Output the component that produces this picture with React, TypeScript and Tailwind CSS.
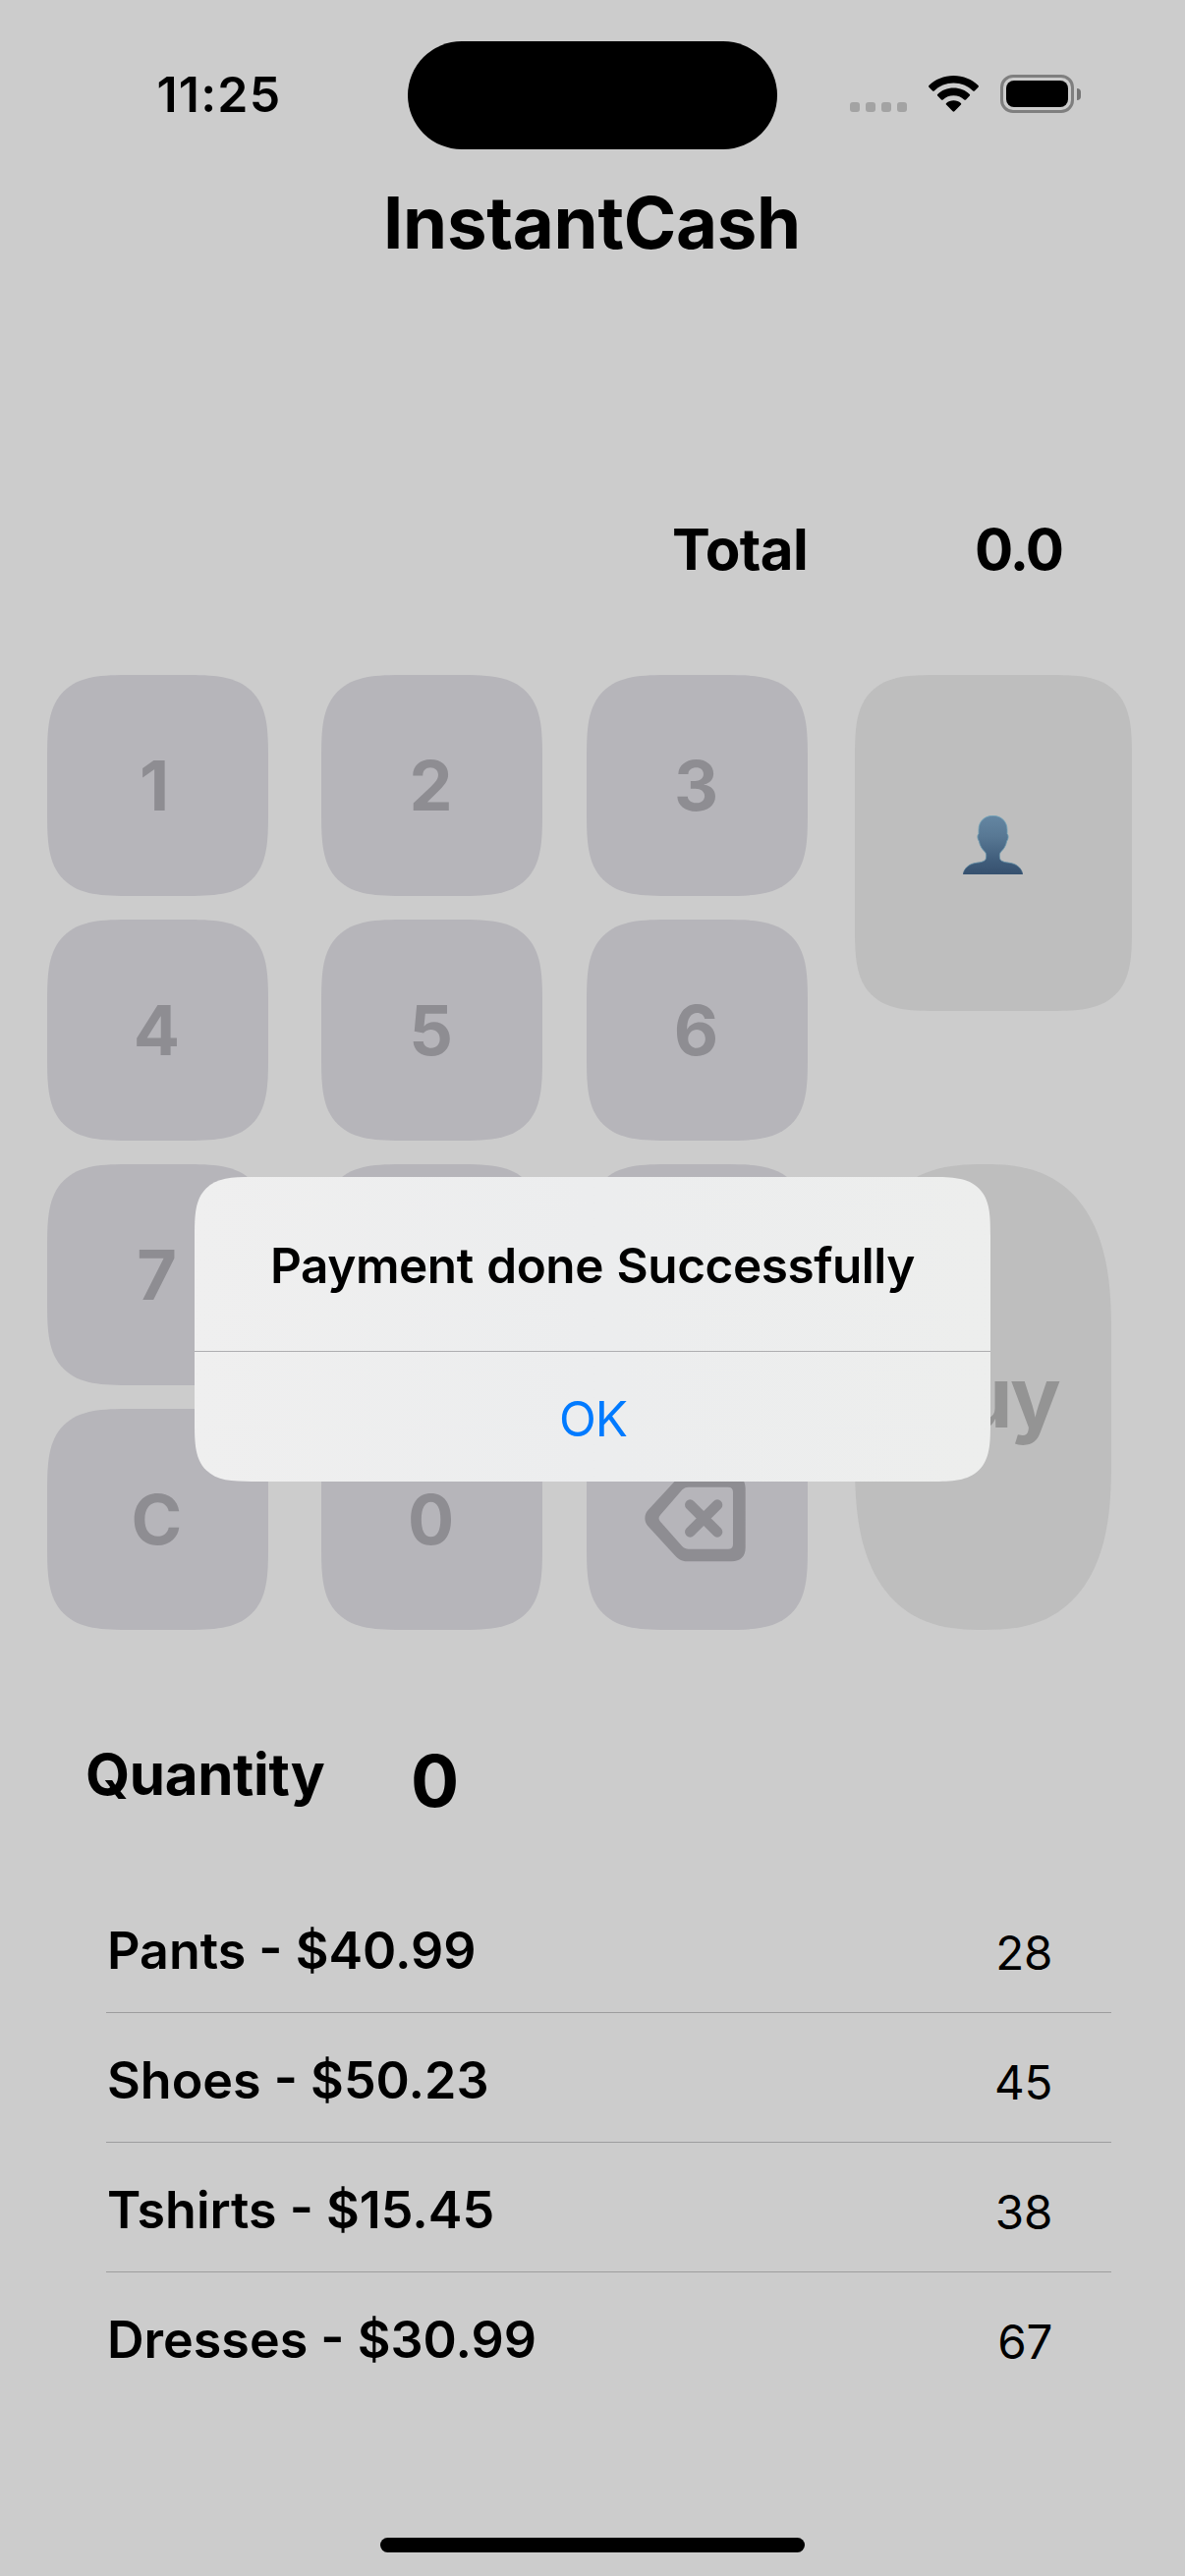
import React from "react";
import { clsx } from "clsx";

const products = [
  { name: "Pants", price: "40.99", stock: 28 },
  { name: "Shoes", price: "50.23", stock: 45 },
  { name: "Tshirts", price: "15.45", stock: 38 },
  { name: "Dresses", price: "30.99", stock: 67 },
];

function WifiIcon() {
  return (
    <svg viewBox="0 0 51 37" className="h-[37px] w-[51px]" fill="#000">
      <path d="M25.5 0C35.3 0 44.2 3.7 50.6 10c.5.5.5 1.200 0 1.700l-3.700 3.700c-.5.5-1.200.5-1.700 0C40 10.500 33.100 7.500 25.500 7.500S11 10.500 5.800 15.400c-.5.5-1.200.5-1.700 0L.4 11.700c-.5-.5-.5-1.200 0-1.700C6.800 3.700 15.700 0 25.500 0Z" />
      <path d="M25.500 12.500c6.400 0 12.100 2.400 16.300 6.400.5.5.5 1.200 0 1.700l-3.800 3.800c-.5.5-1.200.5-1.700 0-2.800-2.600-6.600-4.200-10.800-4.200s-8 1.600-10.800 4.200c-.5.5-1.200.5-1.700 0l-3.800-3.800c-.5-.5-.5-1.200 0-1.700 4.200-4 9.900-6.400 16.300-6.400Z" />
      <path d="M25.500 25.200c2.900 0 5.500 1 7.400 2.700.5.5.5 1.200.1 1.700l-6.600 6.700c-.5.5-1.300.5-1.800 0L18 29.600c-.5-.5-.4-1.200.1-1.700 1.900-1.700 4.500-2.700 7.400-2.700Z" />
    </svg>
  );
}

function BatteryIcon() {
  return (
    <div className="flex items-center gap-[3px]">
      <div className="h-[39px] w-[75px] rounded-[13px] border-3 border-[#7f7f7f] p-[3px]">
        <div className="h-full w-full rounded-[8px] bg-black" />
      </div>
      <div className="h-3 w-1 rounded-r-full bg-[#757575]" />
    </div>
  );
}

function DeleteIcon() {
  return (
    <svg viewBox="48 34 308 265" className="h-[88.3px] w-[102.7px]">
      <path
        fill="#8e8d92"
        fillRule="evenodd"
        d="M182 34H316C341 34 356 50 356 76V257C356 284 341 299 314 299H184C166 299 154 295 142 282L58 191C46 178 46 156 58 143L142 52C154 38 164 34 182 34ZM182 72C175 72 169 74 163 80L96 157C90 164 90 170 96 177L163 253C169 259 175 261 182 261H303C313 261 318 256 318 246V87C318 77 313 72 303 72Z"
      />
      <path d="M187 126L270 209M270 126L187 209" stroke="#8e8d92" strokeWidth="32" strokeLinecap="round" />
    </svg>
  );
}

function PersonIcon() {
  return (
    <svg viewBox="59 58 183 182" className="h-[60.7px] w-[61px]">
      <defs>
        <linearGradient id="bust" x1="0" y1="0" x2="0" y2="1">
          <stop offset="0" stopColor="#6486a2" />
          <stop offset="0.35" stopColor="#587894" />
          <stop offset="0.75" stopColor="#405d7b" />
          <stop offset="1" stopColor="#36506e" />
        </linearGradient>
        <linearGradient id="rim" x1="0" y1="0" x2="0" y2="1">
          <stop offset="0" stopColor="#74a6bb" />
          <stop offset="0.85" stopColor="#5f8ba3" />
          <stop offset="1" stopColor="#36506e" />
        </linearGradient>
      </defs>
      <path
        fill="url(#bust)"
        stroke="url(#rim)"
        strokeWidth="2.500"
        d="M150.500 59C125 59 107 76 107 102V114C102 117 103 131 108 136C111 153 119 162 126 169C130 173 130 178 130 184C130 193 126 197 116 200C106 203 97 202 87 206C71 212 61 225 60 239H241C240 225 230 212 214 206C204 202 195 203 185 200C175 197 171 193 171 184C171 178 171 173 175 169C182 162 190 153 193 136C198 131 199 117 194 114V102C194 76 176 59 150.500 59Z"
      />
    </svg>
  );
}

function StatusBar() {
  return (
    <header className="flex h-[191px] items-start">
      <div className="w-[414.5px] pt-[71px] pl-[159.5px] text-[50px] leading-[50px] font-semibold tracking-[1.2px]">11:25</div>
      <div className="mt-[41.5px] h-[110.5px] w-[376.5px] rounded-full bg-black" />
      <div className="ml-[74px] flex pt-[76px]">
        <div className="mt-7 flex gap-1.5">
          {[0, 1, 2, 3].map((i) => (
            <span key={i} className="size-2.5 rounded-[3px] bg-[#a3a3a3]" />
          ))}
        </div>
        <div className="mt-px ml-[22px]">
          <WifiIcon />
        </div>
        <div className="ml-[22px]">
          <BatteryIcon />
        </div>
      </div>
    </header>
  );
}

function Key({ children, className }: { children: React.ReactNode; className?: string }) {
  return (
    <button
      className={clsx(
        "flex size-[225px] items-center justify-center rounded-[86px] bg-[#b6b5ba] text-[70px] leading-none font-bold text-[#8e8d92] [corner-shape:superellipse(1.68)]",
        className ?? "pr-[2px]",
      )}
    >
      {children}
    </button>
  );
}

function Keypad() {
  return (
    <section className="mt-[82px] flex h-[972px] pl-12">
      <div className="flex flex-col gap-6">
        <Key className="pr-[7px]">1</Key>
        <Key>4</Key>
        <Key>7</Key>
        <Key>C</Key>
      </div>
      <div className="ml-[54px] flex flex-col gap-6">
        <Key>2</Key>
        <Key>5</Key>
        <Key>8</Key>
        <Key>0</Key>
      </div>
      <div className="ml-[45px] flex flex-col gap-6">
        <Key>3</Key>
        <Key>6</Key>
        <Key>9</Key>
        <Key className="pr-1 pb-0.5">
          <DeleteIcon />
        </Key>
      </div>
      <div className="ml-12 flex flex-col gap-[156px]">
        <button className="flex h-[342px] w-[282px] items-center justify-center rounded-[86px] bg-[#bebebe] pt-[4px] pr-[2px] [corner-shape:superellipse(1.68)]">
          <PersonIcon />
        </button>
        <button className="flex h-[474px] w-[261px] items-center justify-center rounded-[130px/170px] bg-[#bebebe] pr-[1px] text-[86px] leading-none font-bold tracking-[-2.5px] text-[#949494] [corner-shape:superellipse(1.36)]">
          Buy
        </button>
      </div>
    </section>
  );
}

function ProductList() {
  return (
    <ul className="mt-[58px] mr-[75px] ml-[108px]">
      {products.map((p, i) => (
        <li
          key={p.name}
          className={clsx(
            "flex h-[132px] items-start justify-between border-b pr-[59.5px]",
            i < products.length - 1 ? "border-[#9d9d9e]" : "border-transparent",
          )}
        >
          <span className="pt-[43px] pl-px text-[52px] leading-[52px] font-semibold">
            {p.name} - ${p.price}
          </span>
          <span className="pt-[47px] text-[47.5px] leading-[48px]">{p.stock}</span>
        </li>
      ))}
    </ul>
  );
}

function PaymentAlert() {
  return (
    <div className="absolute inset-0 flex items-start justify-center pt-[1198px]">
      <div
        role="alertdialog"
        className="flex h-[310px] w-[810px] flex-col rounded-[60px] bg-linear-to-r from-[#efefef] via-[#ecedee] to-[#edeeed] [corner-shape:superellipse(1.68)]"
      >
        <h2 className="h-[177px] pt-[65px] text-center text-[49.5px] leading-[50px] font-semibold tracking-[-0.45px] [word-spacing:1.5px] whitespace-nowrap">
          Payment done Successfully
        </h2>
        <button className="flex-1 border-t border-[#adadb0] text-[49.5px] leading-[50px] tracking-[-1px] text-[#007aff]">
          <span className="block pt-[4px] pl-px">OK</span>
        </button>
      </div>
    </div>
  );
}

export default function App() {
  return (
    <div className="relative flex h-[2622px] w-[1206px] flex-col overflow-hidden bg-[#cccccc] font-['Inter',sans-serif] text-black">
      <StatusBar />
      <h1 className="pr-[1px] text-center text-[72.5px] leading-[72px] font-bold tracking-[-0.3px]">InstantCash</h1>
      <div className="mt-[267px] flex h-[75px] pl-[684px] text-[58.2px] leading-[59px] font-bold">
        <span className="w-[308px] tracking-[-0.6px]">Total</span>
        <span className="tracking-[-1.8px]">0.0</span>
      </div>
      <Keypad />
      <div className="mt-[117px] flex h-[83px] pl-[87px] font-bold">
        <span className="w-[331px] text-[58.2px] leading-[60px] tracking-[-0.35px]">Quantity</span>
        <span className="text-[73px] leading-[74px]">0</span>
      </div>
      <ProductList />
      <div className="mx-auto mt-[138px] h-[15px] w-[432px] rounded-full bg-black" />
      <PaymentAlert />
    </div>
  );
}
